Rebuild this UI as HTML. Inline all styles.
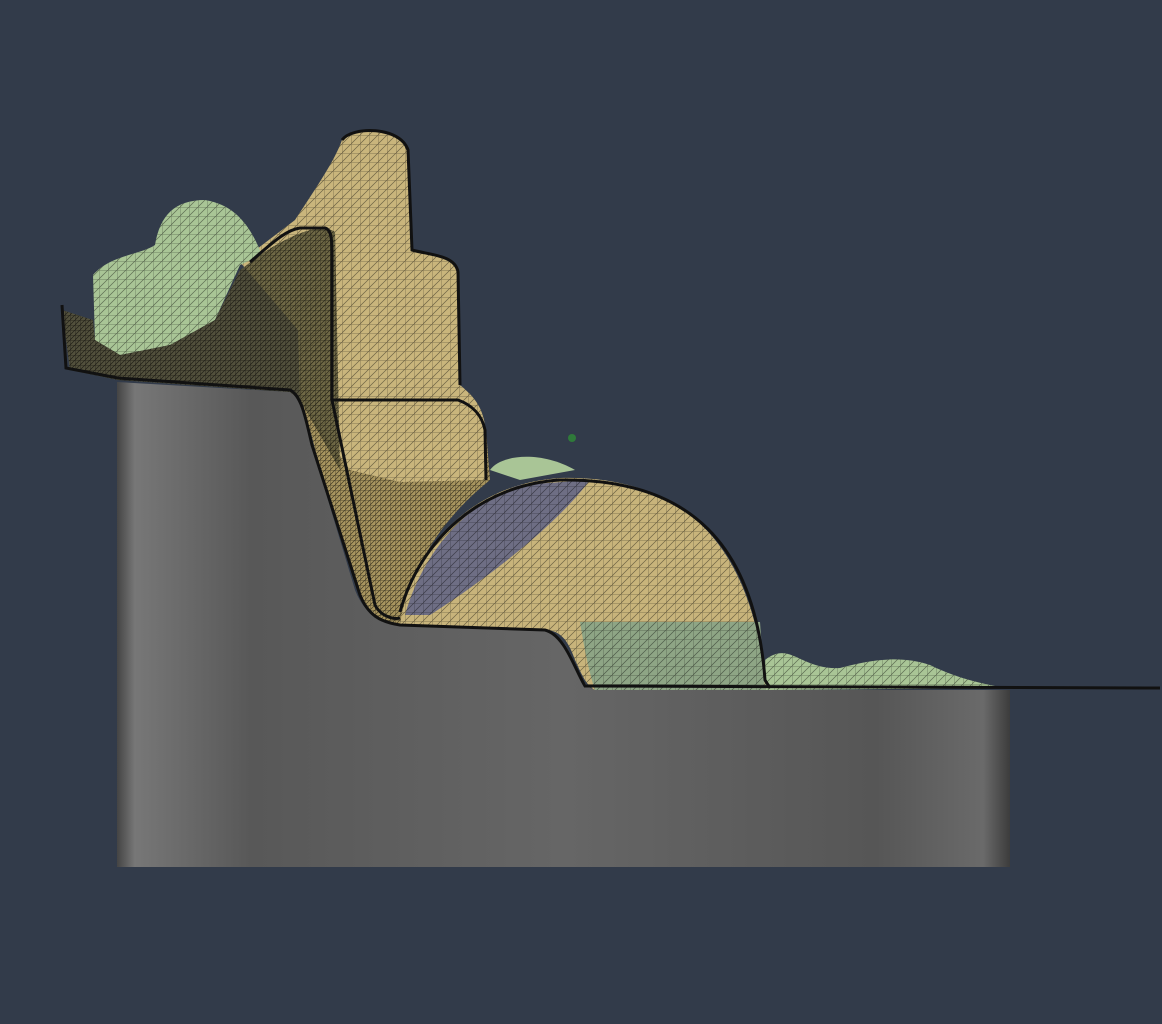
<!DOCTYPE html>
<html><head><style>html,body{margin:0;padding:0;background:#323b4a;}svg{display:block}</style></head><body>
<svg width="1162" height="1024" viewBox="0 0 1162 1024" xmlns="http://www.w3.org/2000/svg">
<defs>
<linearGradient id="g" x1="0" x2="1" y1="0" y2="0">
<stop offset="0" stop-color="#444"/><stop offset="0.02" stop-color="#777"/><stop offset="0.15" stop-color="#585858"/><stop offset="0.5" stop-color="#666"/><stop offset="0.85" stop-color="#565656"/><stop offset="0.97" stop-color="#6a6a6a"/><stop offset="1" stop-color="#3c3c3c"/>
</linearGradient>
<pattern id="m" width="9" height="9" patternUnits="userSpaceOnUse">
<path d="M0 0H9M0 0V9M0 9L9 0" stroke="#000" stroke-width="0.7" opacity="0.45" fill="none"/>
</pattern>
<pattern id="md" width="5" height="5" patternUnits="userSpaceOnUse">
<path d="M0 0H5M0 0V5M0 5L5 0" stroke="#000" stroke-width="0.7" opacity="0.6" fill="none"/>
</pattern>
</defs>
<rect width="1162" height="1024" fill="#323b4a"/>
<path d="M117,382 L290,392 C300,395 305,410 310,440 L355,590 C365,615 380,622 400,625 L540,628 C560,630 570,650 580,675 C585,685 590,690 600,690 L1010,690 L1010,867 L117,867 Z" fill="url(#g)"/>
<!-- dark tan under tower -->
<path d="M300,395 C305,410 310,430 318,460 L360,595 C370,612 380,622 400,625 C410,570 440,520 490,480 L486,430 L460,400 Z" fill="#a8955f"/>
<path d="M300,395 C305,410 310,430 318,460 L360,595 C370,612 380,622 400,625 C410,570 440,520 490,480 L486,430 L460,400 Z" fill="url(#md)"/>
<!-- tan tower -->
<path d="M295,220 C318,185 335,160 342,140 C352,126 400,126 408,150 L412,250 C430,255 455,255 458,272 L460,385 C472,395 482,405 485,425 L486,480 L400,482 L350,470 L300,400 L298,330 L240,262 Z" fill="#c9b57c"/>
<path d="M295,220 C318,185 335,160 342,140 C352,126 400,126 408,150 L412,250 C430,255 455,255 458,272 L460,385 C472,395 482,405 485,425 L486,480 L400,482 L350,470 L300,400 L298,330 L240,262 Z" fill="url(#m)"/>
<!-- green left -->
<path d="M93,275 C110,255 140,255 155,245 C160,215 175,200 205,200 C235,205 250,225 262,255 L240,265 L215,320 L170,345 L120,355 L95,340 Z" fill="#a9c596"/>
<path d="M93,275 C110,255 140,255 155,245 C160,215 175,200 205,200 C235,205 250,225 262,255 L240,265 L215,320 L170,345 L120,355 L95,340 Z" fill="url(#m)"/>
<!-- dark lower lip -->
<path d="M62,310 L70,370 L118,380 L290,392 L300,400 L340,470 L335,232 C320,222 290,235 260,255 L240,270 L215,320 L170,345 L120,355 L95,340 L93,320 Z" fill="#5a5638" opacity="0.8"/>
<path d="M62,310 L70,370 L118,380 L290,392 L300,400 L340,470 L335,232 C320,222 290,235 260,255 L240,270 L215,320 L170,345 L120,355 L95,340 L93,320 Z" fill="url(#md)"/>
<!-- dome -->
<path d="M400,625 C410,560 460,485 560,478 C680,475 750,540 765,680 L765,690 L595,690 C585,685 580,670 575,660 C568,640 560,630 545,630 Z" fill="#c8b47b"/>
<path d="M405,615 C420,560 460,505 520,485 L590,480 C560,520 500,570 430,615 Z" fill="#6e6e84"/>
<path d="M580,622 L760,622 L765,690 L595,690 C588,670 583,640 580,622 Z" fill="#8ea585"/>
<path d="M765,660 C790,640 800,670 840,668 C870,660 900,655 930,665 C960,680 990,685 1005,688 L765,690 Z" fill="#a9c596"/>
<path d="M490,470 C500,455 540,450 575,470 L520,480 Z" fill="#a9c596"/>
<path d="M400,625 C410,560 460,485 560,478 C680,475 750,540 765,680 L765,690 L595,690 C585,685 580,670 575,660 C568,640 560,630 545,630 Z" fill="url(#m)"/>
<path d="M765,660 C790,640 800,670 840,668 C870,660 900,655 930,665 C960,680 990,685 1005,688 L765,690 Z" fill="url(#m)"/>
<!-- black outlines -->
<g fill="none" stroke="#111" stroke-width="3">
<path d="M62,305 L66,368 L118,378 L290,390 C302,396 306,420 312,445 L360,595 C368,615 380,622 400,625 L545,630 C565,635 575,670 585,686 L1160,688"/>
<path d="M250,262 C270,245 285,230 300,228 L325,228 C332,230 332,240 332,260 L332,400 L375,605 C380,615 392,620 400,618"/>
<path d="M400,612 C420,540 480,485 560,480 C690,478 755,545 765,680 L770,688"/>
<path d="M332,400 L458,400 C472,405 482,415 485,430 L486,480"/>
<path d="M342,140 C352,126 400,126 408,150 L412,250 C430,255 455,255 458,272 L460,385"/>
</g>
<circle cx="572" cy="438" r="4" fill="#2f7a3a"/>
</svg>
</body></html>
